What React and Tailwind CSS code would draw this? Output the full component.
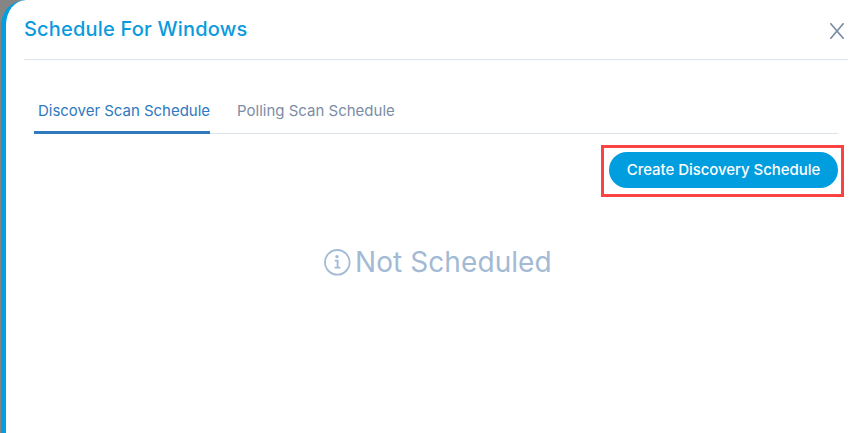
import { useState } from "react";

const tabs = [
  { id: "discover", label: "Discover Scan Schedule", size: "w-[176px] pl-[4px] tracking-[-0.02px]" },
  { id: "polling", label: "Polling Scan Schedule", size: "w-[170px] pl-[5px] tracking-[0px]" },
];

const CloseIcon = () => (
  <svg width="14" height="16" viewBox="0 0 14 16" fill="none" stroke="#788ca6" strokeWidth="1.7" strokeLinecap="round">
    <path d="M0.8 0.8 13.2 15.2M13.2 0.8 0.8 15.2" />
  </svg>
);

const InfoIcon = () => (
  <svg width="28" height="28" viewBox="0 0 28 28" fill="none" stroke="#a3bad4">
    <circle cx="14.3" cy="14.3" r="12.3" strokeWidth="1.8" />
    <circle cx="14" cy="8.6" r="1.7" fill="#a3bad4" stroke="none" />
    <path d="M11.8 12.6H14.6V19.4M11.6 19.6H17.4" strokeWidth="1.9" />
  </svg>
);

const Header = () => (
  <header className="flex h-[60px] justify-between border-b border-[#dce3eb]">
    <h1 className="pt-[15px] text-[20px] leading-[28px] font-medium tracking-[0.2px] text-[#0b9bdc]">
      Schedule For Windows
    </h1>
    <button aria-label="Close" className="mt-[23px] mr-1 h-4">
      <CloseIcon />
    </button>
  </header>
);

const Tabs = ({ active, onChange }) => (
  <nav className="flex h-[48px] gap-[22px] border-b border-[#dce3eb]">
    {tabs.map(({ id, label, size }) => (
      <button
        key={id}
        onClick={() => onChange(id)}
        className={`${size} h-[48px] border-b-[3px] pt-[5px] text-left text-[15px] whitespace-nowrap ${
          active === id ? "border-[#3079be] text-[#3079be]" : "border-transparent text-[#7b8ca6]"
        }`}
      >
        {label}
      </button>
    ))}
  </nav>
);

const App = () => {
  const [active, setActive] = useState("discover");

  return (
    <div className="h-screen overflow-hidden bg-[#858585] pl-px font-['Inter',sans-serif]">
      <div className="h-full rounded-tl-[25px] border-l-[5px] border-[#049ddd] bg-white pr-[14px] pl-[18px]">
        <Header />
        <main className="pt-[26px] pr-[4px] pl-[10px]">
          <div className="pr-[6px]">
            <Tabs active={active} onChange={setActive} />
          </div>
          <div className="mt-[11px] ml-auto h-[52px] w-[243px] border-[3px] border-[#fc4343] pt-[4px] pl-[5px]">
            <button className="h-[36px] w-[229px] rounded-full bg-[#009ddf] pt-px text-[15px] font-medium tracking-[-0.05px] whitespace-nowrap text-white">
              Create Discovery Schedule
            </button>
          </div>
          <div className="mt-[47px] ml-[289px] flex items-center gap-[4px] text-[28px] leading-[36px] tracking-[0.08px] whitespace-nowrap text-[#a3bad4]">
            <InfoIcon />
            Not Scheduled
          </div>
        </main>
      </div>
    </div>
  );
};

export default App;
